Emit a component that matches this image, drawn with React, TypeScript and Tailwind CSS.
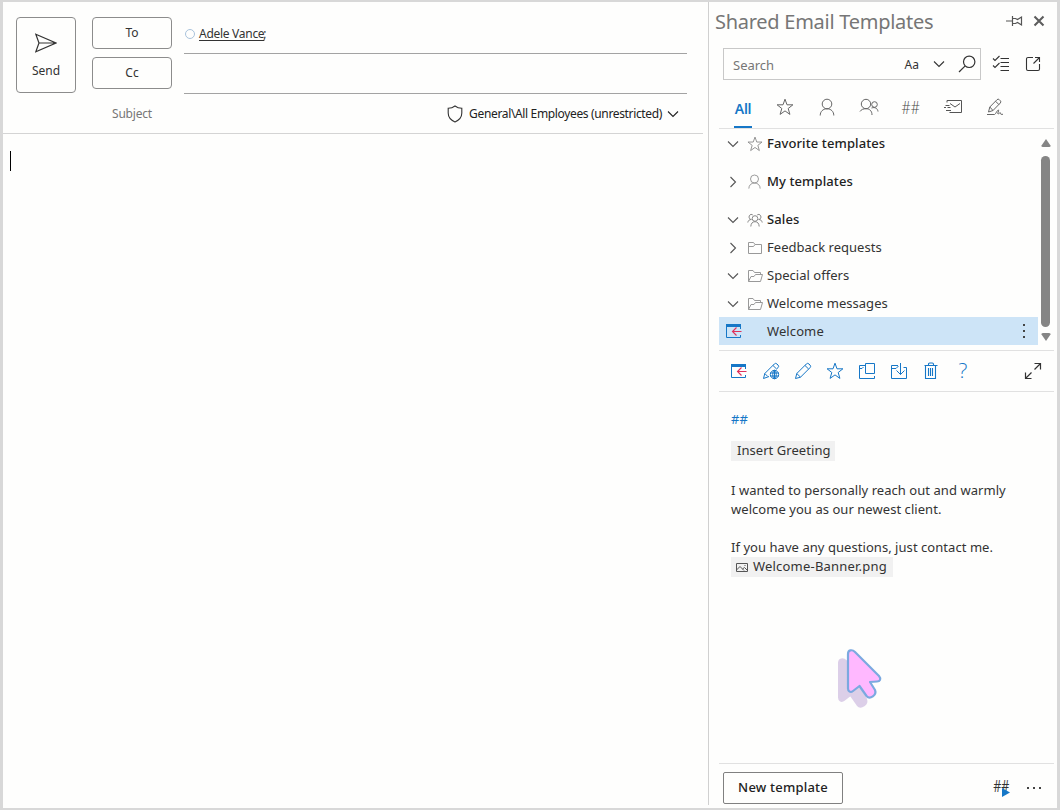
import type { ReactNode } from "react";
import clsx from "clsx";

type IconProps = {
  w?: number;
  h?: number;
  className?: string;
  children: ReactNode;
};

function Icon({ w = 18, h = 18, className, children }: IconProps) {
  return (
    <svg
      width={w}
      height={h}
      viewBox={`0 0 ${w} ${h}`}
      fill="none"
      stroke="currentColor"
      strokeWidth="1"
      className={clsx("shrink-0", className)}
    >
      {children}
    </svg>
  );
}

const SendIcon = () => (
  <Icon w={22} h={20} className="text-[#333]">
    <path d="M.8 1.2 21 10 .8 18.8 4 10Z M4 10h17" strokeWidth="1.2" />
  </Icon>
);

const ShieldIcon = () => (
  <Icon w={16} h={18} className="text-[#333]">
    <path d="M8 1C6 2.600 3.500 3.300 1.200 3.300V8c0 4.200 2.800 7.200 6.800 9 4-1.800 6.800-4.800 6.800-9V3.300C12.500 3.300 10 2.600 8 1Z" strokeWidth="1.1" />
  </Icon>
);

const ChevronDown = ({ className }: { className?: string }) => (
  <Icon w={12} h={8} className={className}>
    <path d="m1 1.500 5 5 5-5" strokeWidth="1.1" />
  </Icon>
);

const ChevronRight = ({ className }: { className?: string }) => (
  <Icon w={12} h={12} className={className}>
    <path d="m3.500 1 5 5-5 5" strokeWidth="1.1" />
  </Icon>
);

const PinIcon = () => (
  <Icon w={18} h={12} className="text-[#555]">
    <path d="M1 6h6M7.500 1v10M7.500 3.500h3l2 1 4-2.500v8l-4-2.500-2 1h-3" strokeWidth="1.2" />
  </Icon>
);

const CloseIcon = () => (
  <Icon w={12} h={12} className="text-[#5d5d5d]">
    <path d="m1.500 1.500 9 9M10.500 1.500l-9 9" strokeWidth="2.1" />
  </Icon>
);

const SearchIcon = () => (
  <Icon className="text-[#333]">
    <circle cx="11.200" cy="6.800" r="5.700" strokeWidth="1.2" />
    <path d="M7.200 10.800 1 17" strokeWidth="1.2" />
  </Icon>
);

const ChecklistIcon = () => (
  <Icon className="text-[#333]">
    <path d="m1 3.500 2 2 4.500-4.500M1 10.500l2 2L7.500 8" strokeWidth="1.1" />
    <path d="M8.500 3.500H17M8.500 7.500H17M8.500 11.500H17M8.500 15.500H17" />
  </Icon>
);

const PopOutIcon = () => (
  <Icon w={16} h={16} className="text-[#333]">
    <path d="M8 1.500H3A1.500 1.500 0 0 0 1.500 3v10A1.500 1.500 0 0 0 3 14.500h10a1.500 1.500 0 0 0 1.500-1.500V8M8.500 7.500l6-6M10 1.500h4.500V6" strokeWidth="1.1" />
  </Icon>
);

const StarIcon = ({ size = 18, className }: { size?: number; className?: string }) => (
  <svg width={size} height={size} viewBox="0 0 18 18" fill="none" stroke="currentColor" className={className}>
    <path d="m9 1.200 2 5.600h5.900l-4.700 3.700 1.700 5.900L9 12.900l-4.900 3.500 1.700-5.900L1.100 6.800H7Z" />
  </svg>
);

const PersonIcon = ({ size = 18, className }: { size?: number; className?: string }) => (
  <svg width={size} height={size} viewBox="0 0 18 18" fill="none" stroke="currentColor" className={className}>
    <circle cx="9" cy="6" r="4.800" />
    <path d="M2.200 17.500c0-4 2.800-6.700 6.800-6.700s6.800 2.700 6.800 6.700" />
  </svg>
);

const PeopleIcon = () => (
  <Icon w={20} className="text-[#666]">
    <circle cx="7" cy="6" r="4.700" />
    <path d="M1 13.500c1.200-2 3.500-2.800 6-2.800 3.400 0 6 2 6 6.300" />
    <circle cx="15.500" cy="6.500" r="2.800" />
    <path d="M12.500 10c3.500-1.200 6 .300 6.500 3.500" />
  </Icon>
);

const TeamIcon = ({ className }: { className?: string }) => (
  <Icon w={16} h={14} className={className}>
    <circle cx="8" cy="5.500" r="2.800" />
    <path d="M3.800 13.500c.2-3.200 1.700-4.800 4.200-4.800s4 1.600 4.200 4.800M4.500 6.500C2.500 6.500 1.500 4.500 2.300 2.800 3 1.200 5 1 5.800 2M11.500 6.500c2 0 3-2 2.200-3.700C13 1.200 11 1 10.200 2M.8 9.500c.4-2 1.500-3 3.400-3M15.200 9.500c-.4-2-1.500-3-3.400-3" />
  </Icon>
);

const MailFastIcon = () => (
  <Icon className="text-[#555]">
    <path d="M3 4.500v-2h14.500v12H8M6 5.500l5 3.500 5-3.500M1.500 7.500h4M0 9.500h2M3.500 9.500h3M2 12.500h5M5.500 14.500h3" />
  </Icon>
);

const SignatureIcon = () => (
  <Icon className="text-[#666]">
    <path d="m2.500 14 1.300-5L11 1.700a1.600 1.600 0 0 1 2.300 0l1 1a1.600 1.600 0 0 1 0 2.300L7 12.500ZM9.500 3.200 13 6.700M3.800 9 7 12.500M1 16.500h7.500c1 0 3-5 4-4.500.8.600-1.500 3.500-.5 4 .8.400 1.500-1.600 2.200-1.400.6.300 0 1.500.8 1.700h2" />
  </Icon>
);

const FolderIcon = () => (
  <Icon w={16} h={14} className="text-[#999]">
    <path d="M1.500 12.500v-11h5l1.500 2h6.500v9ZM1.500 5.500h5l1.500-2" />
  </Icon>
);

const FolderOpenIcon = () => (
  <Icon w={16} h={14} className="text-[#999]">
    <path d="M1.500 12.500v-11h4.500l1.500 2h6v2M1.500 12.500l2.500-5h3l1.500-2h7l-2 7Z" />
  </Icon>
);

const InsertIcon = () => (
  <Icon w={16} h={16} className="text-[#1677c7]">
    <path d="M0 1h15v3H0Z" fill="currentColor" stroke="none" />
    <path d="M14.500 3v3M.500 1v13.500h14V12" />
    <path d="M15.500 8.500H7M10.500 4.500l-4 4 4 4" stroke="#e0315c" strokeWidth="1.1" />
  </Icon>
);

const PencilIcon = () => (
  <Icon>
    <path d="m1.500 16.500 1.300-5 9.500-9.500a1.900 1.900 0 0 1 2.700 0l1 1a1.900 1.900 0 0 1 0 2.700L6.500 15.200ZM11 3.500 14.600 7M2.800 11.500l3.700 3.700" />
  </Icon>
);

const PencilGlobeIcon = () => (
  <Icon>
    <path d="m7 14.500-5.500 2 1.300-5 9.500-9.500a1.900 1.900 0 0 1 2.700 0l1 1a1.900 1.900 0 0 1 0 2.700L14.500 7M11 3.500 14.600 7M2.800 11.500l3 3" />
    <circle cx="12.500" cy="12.500" r="4.200" />
    <ellipse cx="12.500" cy="12.500" rx="1.800" ry="4.200" />
    <path d="M8.300 11h8.400M8.300 14h8.400M12.500 8.300v8.400" />
  </Icon>
);

const CopyIcon = () => (
  <Icon>
    <path d="M7.500 1.500h9v10h-9ZM7.500 3.500h-6v13h15V14M1.500 6.500H4l1.500-1.500" />
  </Icon>
);

const MoveToFolderIcon = () => (
  <Icon>
    <path d="M8 3.500H1.500v13h15v-11H13.500M1.500 6.500h4.500L8.500 4M10.500 1v11.500M6.500 8.500l4 4 4-4" />
  </Icon>
);

const TrashIcon = () => (
  <Icon>
    <path d="M2.500 3.500h13M6.500 3.500V2.200c0-.700.500-1.200 1.200-1.200h2.600c.7 0 1.200.5 1.200 1.200v1.300M3.500 3.500v13h10v-13M6.500 6v8M8.500 6v8M10.500 6v8" strokeWidth="1.1" />
  </Icon>
);

const ExpandIcon = () => (
  <Icon className="text-[#333]">
    <path d="M10.500 7.500 16.500 1.500M10.500 1.500h6v6M7.500 10.500l-6 6M1.500 10.500v6h6" strokeWidth="1.2" />
  </Icon>
);

const ImageIcon = () => (
  <Icon w={12} h={10} className="text-[#555]">
    <path d="M.500 1.500h11v8H.500ZM.500 8 4 4.500 8 8.500M6.500 7 8.500 5.500l3 3M8.500 3.500h1" />
  </Icon>
);

const outlineBtn =
  "flex items-center justify-center rounded-[4px] border border-[#8c8c8c] text-[12px] text-[#333]";

const pointerPath =
  "M14 8C14 4 18 3 21 6L45 30C47.500 33 46 35.500 43 35.500L36 36L41 44C43 49 36 54 32.500 50L25.500 40L19 45C16.500 47 14 45.500 14 42.500Z";

type Row = {
  label: string;
  open?: boolean;
  group?: boolean;
  icon: ReactNode;
};

const rows: Row[] = [
  { label: "Favorite templates", open: true, group: true, icon: <StarIcon size={16} className="text-[#888]" /> },
  { label: "My templates", group: true, icon: <PersonIcon size={15} className="text-[#888]" /> },
  { label: "Sales", open: true, group: true, icon: <TeamIcon className="text-[#888]" /> },
  { label: "Feedback requests", icon: <FolderIcon /> },
  { label: "Special offers", open: true, icon: <FolderOpenIcon /> },
  { label: "Welcome messages", open: true, icon: <FolderOpenIcon /> },
];

const tabs: ReactNode[] = [
  <StarIcon className="text-[#666]" />,
  <PersonIcon className="text-[#666]" />,
  <PeopleIcon />,
  <span className="scale-x-[.78] font-['Open_Sans'] text-[18px] font-light text-[#444]">##</span>,
  <MailFastIcon />,
  <SignatureIcon />,
];

const tools: ReactNode[] = [
  <InsertIcon />,
  <PencilGlobeIcon />,
  <PencilIcon />,
  <StarIcon />,
  <CopyIcon />,
  <MoveToFolderIcon />,
  <TrashIcon />,
  <span className="font-['Open_Sans'] text-[21px] font-light">?</span>,
];

function TreeRow({ row, last }: { row: Row; last: boolean }) {
  return (
    <div className={clsx("flex h-7 items-center pl-2 pt-px", row.group && !last && "mb-2.5")}>
      {row.open ? <ChevronDown className="text-[#555]" /> : <ChevronRight className="text-[#555]" />}
      <span className="ml-2 flex w-5 shrink-0">{row.icon}</span>
      <span className={clsx("pt-px", row.group ? "font-medium tracking-[0.1px] text-[#222]" : "tracking-[0.03px]")}>
        {row.label}
      </span>
    </div>
  );
}

function Compose() {
  return (
    <div className="flex w-[705px] shrink-0 flex-col">
      <div className="mr-[5px] flex h-[132px] shrink-0 border-b border-[#d4d4d4] pl-[13px] pt-[15px]">
        <button className={clsx(outlineBtn, "h-[76px] w-[60px] flex-col gap-[9px] pt-[2px]")}>
          <SendIcon />
          Send
        </button>
        <div className="ml-4 flex w-20 flex-col gap-2">
          <button className={clsx(outlineBtn, "h-8")}>To</button>
          <button className={clsx(outlineBtn, "h-8")}>Cc</button>
          <div className="flex h-8 items-center justify-center pt-px text-[12px] tracking-[-0.2px] text-[#767676]">
            Subject
          </div>
        </div>
        <div className="ml-3 flex w-[503px] flex-col text-[12px]">
          <div className="flex h-[37px] items-center border-b border-[#a3a3a3] pb-[3px] pl-px text-[#333]">
            <span className="size-2.5 rounded-full border border-[#a9c3dc]" />
            <span className="ml-1 tracking-[-0.28px] underline underline-offset-2">Adele Vance</span>
            <span className="-ml-px">;</span>
          </div>
          <div className="h-10 border-b border-[#a3a3a3]" />
          <div className="flex h-[39px] items-center justify-end pr-2 text-[#222]">
            <ShieldIcon />
            <span className="ml-1.5 mr-[5px] tracking-[-0.35px]">General\All Employees (unrestricted)</span>
            <ChevronDown />
          </div>
        </div>
      </div>
      <div className="ml-[7px] mt-[17px] h-5 w-px bg-black" />
    </div>
  );
}

function Preview() {
  return (
    <div className="relative flex-1 pl-[22px] text-[13px] tracking-[0.05px] text-[#333]">
      <div className="mt-[18px] h-[19px] leading-[19px] text-[#1677c7]">##</div>
      <div className="mt-3 h-5 w-[104px] bg-[#f1f1f1] pl-1.5 leading-[19px] tracking-0">Insert Greeting</div>
      <p className="mt-5 leading-[19px]">
        I wanted to personally reach out and warmly
        <br />
        welcome you as our newest client.
      </p>
      <p className="mt-[19px] leading-[19px]">If you have any questions, just contact me.</p>
      <div className="flex h-5 w-[162px] items-center gap-[5px] bg-[#f1f1f1] pl-[5px] leading-[19px]">
        <ImageIcon />
        <span className="pb-0.5 tracking-[0.2px]">Welcome-Banner.png</span>
      </div>
      {/* pointer */}
      <svg width="50" height="64" viewBox="0 0 50 64" className="absolute left-[125px] top-[254px]">
        <path d={pointerPath} fill="#dccfe8" stroke="#dccfe8" strokeWidth="2" transform="translate(-9 9)" />
        <path d={pointerPath} fill="#ffb8ff" stroke="#7ba9e0" strokeWidth="2.2" strokeLinejoin="round" />
      </svg>
    </div>
  );
}

function TemplatesPane() {
  return (
    <div className="flex min-w-0 flex-1 flex-col text-[13px] text-[#333]">
      <div className="flex h-[46px] shrink-0 pl-1.5 pr-3">
        <h1 className="flex-1 pt-[5px] text-[20px] leading-[30px] tracking-[-0.27px] text-[#767676]">
          Shared Email Templates
        </h1>
        <div className="flex h-[38px] items-center gap-[10px]">
          <PinIcon />
          <CloseIcon />
        </div>
      </div>
      <div className="flex h-8 shrink-0 items-center pl-3.5">
        <div className="flex h-8 w-[258px] items-center border border-[#c8c8c8] pl-[9px] pr-[4px]">
          <span className="flex-1 pt-[3px] text-[#767676]">Search</span>
          <span className="mr-3.5 pt-px text-[12px]">Aa</span>
          <ChevronDown />
          <span className="ml-[13px]">
            <SearchIcon />
          </span>
        </div>
        <span className="ml-[11px]">
          <ChecklistIcon />
        </span>
        <span className="ml-[15px]">
          <PopOutIcon />
        </span>
      </div>
      <div className="ml-2.5 mr-[3px] flex h-[49px] shrink-0 border-b border-[#e1e1e1] pl-[3px]">
        <div className="flex w-[42px] flex-col items-center text-[#1677c7]">
          <span className="h-[46px] pt-[9px] text-[14px] font-semibold leading-[39px] tracking-[-0.3px]">All</span>
          <span className="h-0.5 w-[18px] bg-[#1677c7]" />
        </div>
        {tabs.map((tab, i) => (
          <div key={i} className="flex w-[42px] items-center justify-center pt-[6px]">
            {tab}
          </div>
        ))}
      </div>
      <div className="ml-2.5 flex h-[221px] shrink-0">
        <div className="w-[319px]">
          {rows.map((row) => (
            <TreeRow key={row.label} row={row} last={row.label === "Sales"} />
          ))}
          <div className="flex h-7 items-center bg-[#cde4f7] pl-[7px] pr-[13px]">
            <InsertIcon />
            <span className="ml-[25px] flex-1 pt-0.5 tracking-[0.1px]">Welcome</span>
            <span className="flex flex-col gap-1">
              <i className="size-0.5 bg-[#444]" />
              <i className="size-0.5 bg-[#444]" />
              <i className="size-0.5 bg-[#444]" />
            </span>
          </div>
        </div>
        <div className="ml-[2px] flex w-[11px] flex-col items-center pt-[10px]">
          <svg width="10" height="8" viewBox="0 0 10 8" className="text-[#858585]">
            <path d="M5 0 9.500 6.500Q10 8 8 8H2Q0 8 .500 6.500Z" fill="currentColor" />
          </svg>
          <div className="mt-[9px] h-[171px] w-[9px] rounded-full bg-[#858585]" />
          <svg width="10" height="8" viewBox="0 0 10 8" className="mt-[6px] text-[#858585]">
            <path d="M5 8 9.500 1.500Q10 0 8 0H2Q0 0 .500 1.500Z" fill="currentColor" />
          </svg>
        </div>
      </div>
      <div className="ml-2.5 mr-[3px] flex h-[42px] shrink-0 items-center border-y border-[#e1e1e1] pl-1 pr-[5px] text-[#1677c7]">
        {tools.map((tool, i) => (
          <div key={i} className="flex w-8 items-center justify-center">
            {tool}
          </div>
        ))}
        <div className="ml-auto flex w-8 justify-center">
          <ExpandIcon />
        </div>
      </div>
      <Preview />
      <div className="ml-2.5 mr-[3px] flex h-[45px] shrink-0 border-t border-[#e1e1e1] pl-1 pr-1 pt-2">
        <button className="h-8 w-[120px] rounded-[2px] border border-[#808080] text-[13px] font-medium tracking-[0.2px] text-[#222]">
          New template
        </button>
        <div className="ml-auto flex h-8 items-center">
          <span className="relative flex w-8 justify-center pb-1 pr-px">
            <span className="scale-x-[.78] font-['Open_Sans'] text-[16px] leading-5">##</span>
            <svg width="8" height="9" viewBox="0 0 8 9" className="absolute left-[16px] top-[12px]">
              <path d="M0 0v9l8-4.500Z" fill="#1677c7" />
            </svg>
          </span>
          <span className="flex w-8 justify-center gap-1 pr-px">
            <i className="size-0.5 bg-[#444]" />
            <i className="size-0.5 bg-[#444]" />
            <i className="size-0.5 bg-[#444]" />
          </span>
        </div>
      </div>
    </div>
  );
}

export default function App() {
  return (
    <div className="flex h-[810px] w-[1060px] overflow-hidden border-x-[3px] border-y-2 border-[#d8d8d8] bg-[#fefefd] font-['Noto_Sans','Open_Sans',sans-serif]">
      <Compose />
      <div className="mb-[3px] w-px shrink-0 bg-[#d0d0d0]" />
      <TemplatesPane />
    </div>
  );
}
